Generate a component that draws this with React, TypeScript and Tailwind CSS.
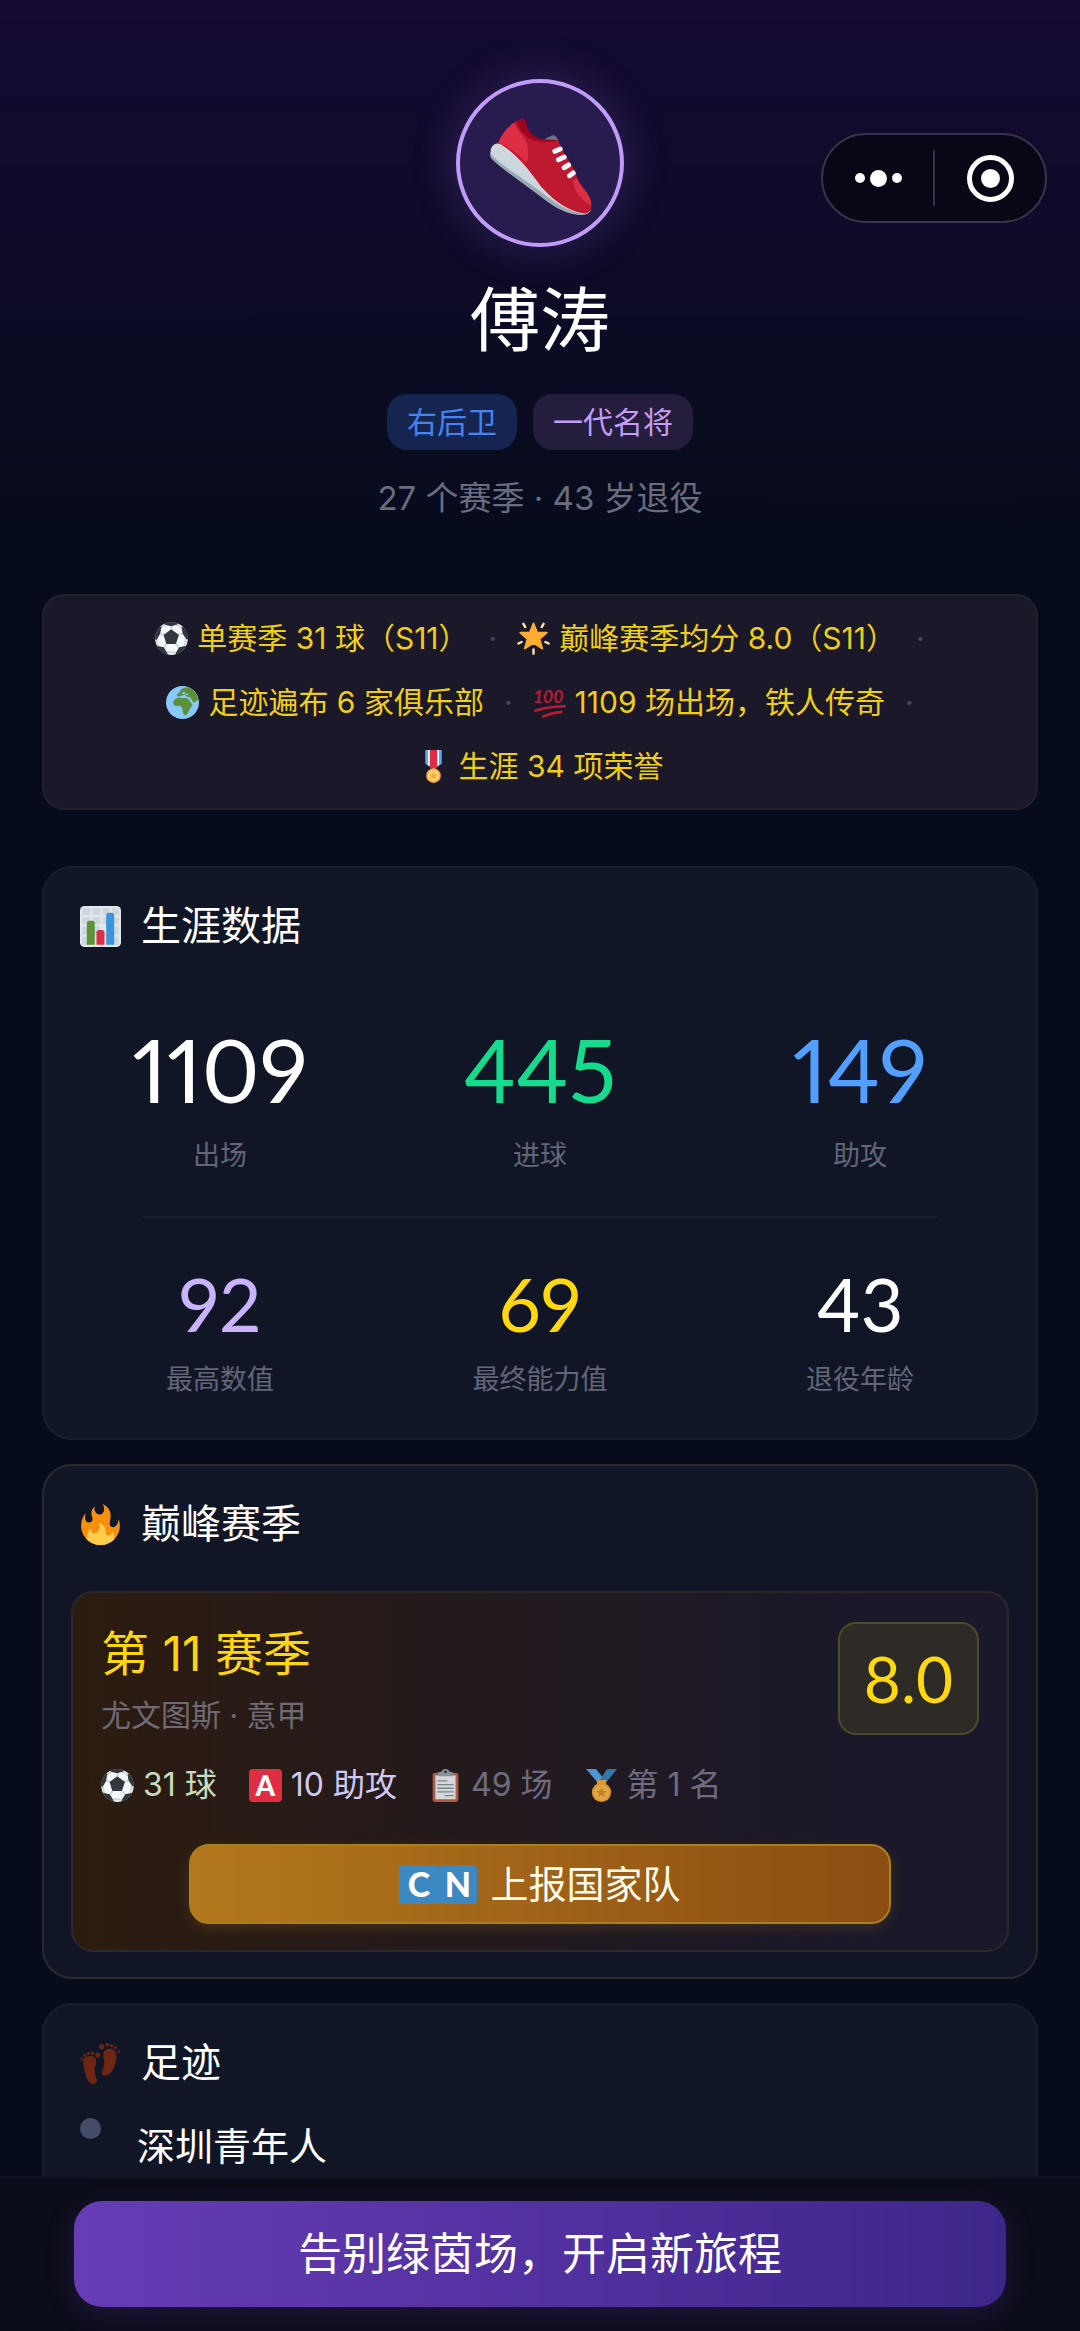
import type { ReactNode } from "react";

interface IconProps {
  className?: string;
}

function SneakerIcon({ className }: IconProps) {
  return (
    <svg viewBox="448 150 308 312" className={className} aria-hidden="true">
      <path fill="#9AAAB4" d="M455 268C449 278 450 288 456 294C490 328 560 372 616 417C656 449 700 464 728 462C742 461 749 456 753 448Z" />
      <path fill="#CCD6DD" d="M468 248C456 252 450 266 453 279C480 311 566 362 624 408C662 438 704 458 738 458C746 457 750 452 752 444L560 290C530 262 490 244 468 248Z" />
      <path fill="#66757F" d="M606 238L638 223C648 221 652 229 656 242Z" />
      <path fill="#BE1931" d="M475 246C488 214 520 181 545 173C553 172 557 178 558 188C562 215 585 238 620 237C635 236 650 236 656 239C660 250 666 262 675 280C690 302 706 328 712 350C722 378 755 400 755 432C755 450 745 459 733 457C680 450 632 410 600 372C565 322 520 268 475 246Z" />
      <path fill="#DD2E44" d="M475 246C484 222 502 198 524 184C528 212 560 222 564 262C566 284 564 296 560 307C534 276 508 258 475 246Z" />
      <path fill="#A0041E" d="M530 180C536 205 556 232 590 240C615 245 640 241 656 239C640 234 600 240 580 222C562 206 560 190 557 179C552 170 540 174 530 180Z" />
      <path fill="#DD2E44" d="M700 358C700 385 722 420 754 432C756 400 724 384 712 352Z" />
      <g stroke="#F5F8FA" strokeWidth="15" strokeLinecap="round">
        <path d="M645 271L661 264" />
        <path d="M656 296L673 288" />
        <path d="M673 320L686 312" />
        <path d="M689 344L700 336" />
      </g>
    </svg>
  );
}

function BallIcon({ className }: IconProps) {
  return (
    <svg viewBox="0 0 36 36" className={className} aria-hidden="true">
      <defs>
        <clipPath id="ball">
          <circle cx="18" cy="18" r="18" />
        </clipPath>
      </defs>
      <g clipPath="url(#ball)">
        <circle cx="18" cy="18" r="18" fill="#F5F8FA" />
        <path stroke="#CCD6DD" strokeWidth="2" d="M18 10V3M11 14.500L3 12M25 14L32 12M27 29L21 21M9 29L15 21M3.500 26L1 18M13 33H22M32 26L34 17M30 7L22 2M5.500 7L12 2" />
        <path fill="#31373D" d="M25.500 13.500L18.300 8.400C18 8.200 17.500 8.200 17.100 8.400L10 13.600C9.600 13.900 9.500 14.300 9.600 14.700L12.100 23.300C12.200 23.700 12.600 24 13 24H22C22.400 24 22.800 23.700 23 23.300L25.900 14.700C26 14.200 25.900 13.800 25.500 13.500Z" />
        <path fill="#31373D" d="M0 18V12L5 5H7L5.600 12.700L2 19.400L1 19.500ZM10.600 3L11 0H24L25 2.500L17.700 4.500ZM29 6L31 5L36 12V19L34 18.500L30.100 12.500ZM2 26L9.500 27.500L13.600 34L13 36H8ZM34 26L26.500 27.500L22.400 34L23 36H28Z" />
      </g>
    </svg>
  );
}

function StarIcon({ className }: IconProps) {
  return (
    <svg viewBox="0 0 36 36" className={className} aria-hidden="true">
      <path fill="#FFAC33" d="M18 1.500L22 11.500H32.500L24.500 18.500L27.500 29L18 23L8.500 29L11.500 18.500L3.500 11.500H14Z" stroke="#FFAC33" strokeWidth="2" strokeLinejoin="round" />
      <g stroke="#FFE8A6" strokeWidth="2.600" strokeLinecap="round">
        <path d="M18 30V34.500M1.500 23.500L5 21.800M34.500 23.500L31 21.800M7 2L9 5.500M29 2L27 5.500" />
      </g>
    </svg>
  );
}

function GlobeIcon({ className }: IconProps) {
  return (
    <svg viewBox="0 0 36 36" className={className} aria-hidden="true">
      <circle cx="18" cy="18" r="18" fill="#88C9F9" />
      <path fill="#5C913B" d="M8 17C7 20 9 22 12 22C15 21 17 22 18 25C18 28 19 31 21 32C24 31 24 28 26 25C28 22 30 20 28 19C26 18 26 15 24 14C21 12 19 14 17 13C14 12 10 13 8 17ZM12 9C11 11 13 12 15 11C17 11 19 9 21 10C23 11 24 13 26 12C28 14 29 18 31 18C33 17 34 15 35.500 15C34 8 30 4 26 2C22 1 20 2 18 3C14 5 17 6 12 9Z" />
      <path fill="#88C9F9" d="M17 8L20 6L21 9L25 8L23 10L19 9Z" />
    </svg>
  );
}

function HundredIcon({ className }: IconProps) {
  return (
    <svg viewBox="0 0 36 36" className={className} aria-hidden="true">
      <text x="0" y="19" fill="#BB1A34" fontFamily="Lato, sans-serif" fontSize="19" fontWeight="700" fontStyle="italic">
        100
      </text>
      <g fill="none" stroke="#BB1A34" strokeWidth="2.800" strokeLinecap="round">
        <path d="M2.500 27C12 23.500 22 22.300 34.500 22" />
        <path d="M11 33.500C17 30.500 23 29 31 28.500" />
      </g>
    </svg>
  );
}

function MilitaryMedalIcon({ className }: IconProps) {
  return (
    <svg viewBox="0 0 36 36" className={className} aria-hidden="true">
      <path fill="#55ACEE" d="M9 0H27V15L18 21L9 15Z" />
      <path fill="#F5F8FA" d="M12 0H24V17H12Z" />
      <path fill="#DD2E44" d="M14 0H22V20H14Z" />
      <circle cx="18" cy="28" r="8" fill="#FFAC33" />
      <circle cx="18" cy="28" r="6" fill="#FFD983" />
      <path fill="#FFAC33" d="M18 23L19.500 26.500L23 26.700L20.300 29L21.200 32.500L18 30.600L14.800 32.500L15.700 29L13 26.700L16.500 26.500Z" />
    </svg>
  );
}

function SportsMedalIcon({ className }: IconProps) {
  return (
    <svg viewBox="0 0 36 36" className={className} aria-hidden="true">
      <path fill="#55ACEE" d="M1 0H12L20 10L15 16Z" />
      <path fill="#3B88C3" d="M24 0H35L22 16L15 14Z" />
      <path fill="#FFAC33" d="M13 12H23V17H13Z" />
      <circle cx="18" cy="25.500" r="10.500" fill="#FFAC33" />
      <circle cx="18" cy="25.500" r="8.200" fill="#FFC450" />
      <path fill="#E8961E" d="M18 19.500L19.700 23.700L24 24L20.700 26.800L21.800 31L18 28.700L14.200 31L15.300 26.800L12 24L16.300 23.700Z" />
    </svg>
  );
}

function ChartIcon({ className }: IconProps) {
  return (
    <svg viewBox="0 0 36 36" className={className} aria-hidden="true">
      <rect width="36" height="36" rx="4" fill="#E1E8ED" />
      <g fill="#CCD6DD">
        <path d="M2 2H9V8H2ZM11 2H18V8H11ZM20 2H26V8H20ZM28 2H34V8H28ZM2 10H9V16H2ZM11 10H18V16H11ZM20 10H26V16H20ZM28 10H34V16H28ZM2 18H9V25H2ZM11 18H18V25H11ZM28 18H34V25H28ZM2 27H9V34H2ZM28 27H34V34H28Z" />
      </g>
      <path fill="#5C913B" d="M6 34V15C6 14 7 13 8 13H11C12 13 13 14 13 15V34Z" />
      <path fill="#DD2E44" d="M14.500 34V23C14.500 22 15.500 21 16.500 21H19.500C20.500 21 21.500 22 21.500 23V34Z" />
      <path fill="#3B94D9" d="M23 34V8C23 7 24 6 25 6H28C29 6 30 7 30 8V34Z" />
    </svg>
  );
}

function FireIcon({ className }: IconProps) {
  return (
    <svg viewBox="0 0 36 36" className={className} aria-hidden="true">
      <path fill="#F4900C" d="M35 19c0-2.062-.367-4.039-1.040-5.868-.46 5.389-3.333 8.157-6.335 6.868-2.812-1.208-.917-5.917-.777-8.164.236-3.809-.012-8.169-6.931-11.794 2.875 5.500.333 8.917-2.333 9.125-2.958.231-5.667-2.542-4.667-7.042-3.238 2.386-3.332 6.402-2.333 9 1.042 2.708-.042 4.958-2.583 5.208-2.840.28-4.418-3.041-2.963-8.333C2.520 10.965 1 14.805 1 19c0 9.389 7.611 17 17 17s17-7.611 17-17z" />
      <path fill="#FFCC4D" d="M28.394 23.999c.148 3.084-2.561 4.293-4.019 3.709-2.106-.843-1.541-2.291-2.083-5.291s-2.625-5.083-5.708-6c2.250 6.333-1.247 8.667-3.080 9.084-1.872.426-3.753-.001-3.968-4.007C7.352 23.668 6 26.676 6 30c0 .368.023.73.055 1.090C9.125 34.124 13.342 36 18 36s8.875-1.876 11.945-4.910c.032-.36.055-.722.055-1.090 0-2.187-.584-4.236-1.606-6.001z" />
    </svg>
  );
}

function ClipboardIcon({ className }: IconProps) {
  return (
    <svg viewBox="0 0 36 36" className={className} aria-hidden="true">
      <rect x="4" y="4" width="28" height="32" rx="3" fill="#C1694F" />
      <rect x="7" y="7" width="22" height="26" fill="#F5F8FA" />
      <path fill="#99AAB5" d="M10 8V5C10 4 11 3 12 3H14C14 1 16 0 18 0S22 1 22 3H24C25 3 26 4 26 5V8Z" />
      <circle cx="18" cy="3" r="1.500" fill="#292F33" />
      <path stroke="#8899A6" strokeWidth="1.500" d="M9 13H20M9 17H27M9 21H27M9 25H27M17 29H27" />
    </svg>
  );
}

function FootprintsIcon({ className }: IconProps) {
  return (
    <svg viewBox="0 0 36 36" className={className} aria-hidden="true">
      <g fill="#6E2613">
        <path d="M3 19C2 14 5 11.500 9 11.500C13 11.500 15 14 14 18C13 22 12 25 14 30C16 34 14 36 11 36C7 36 4 26 3 19Z" />
        <circle cx="15.500" cy="10.500" r="2.200" />
        <circle cx="11" cy="9" r="1.500" />
        <circle cx="7.400" cy="9.200" r="1.400" />
        <circle cx="4.300" cy="11" r="1.300" />
        <circle cx="1.800" cy="14" r="1.200" />
        <path d="M32 12C32 7 29 4.500 25.500 5C21.500 5.500 20 8 20.500 12C21.500 16 22 19 20 23C18 27 20 29 23 28.500C28 28 32 18 32 12Z" />
        <circle cx="19" cy="3.200" r="2.300" />
        <circle cx="24" cy="1.600" r="1.600" />
        <circle cx="27.800" cy="2.300" r="1.400" />
        <circle cx="31" cy="4.200" r="1.300" />
        <circle cx="34" cy="7.500" r="1.200" />
      </g>
    </svg>
  );
}

const highlights = [
  { icon: <BallIcon className="size-[33px]" />, text: "单赛季 31 球（S11）" },
  { icon: <StarIcon className="size-[33px]" />, text: "巅峰赛季均分 8.0（S11）" },
  { icon: <GlobeIcon className="size-[33px]" />, text: "足迹遍布 6 家俱乐部" },
  { icon: <HundredIcon className="size-[33px]" />, text: "1109 场出场，铁人传奇" },
  { icon: <MilitaryMedalIcon className="size-[33px]" />, text: "生涯 34 项荣誉" },
];

const totals = [
  { label: "出场", value: "1109", color: "text-white" },
  { label: "进球", value: "445", color: "text-[#14dc8c]" },
  { label: "助攻", value: "149", color: "text-[#529fff]" },
];

const abilities = [
  { label: "最高数值", value: "92", color: "text-[#c9b3fb]" },
  { label: "最终能力值", value: "69", color: "text-[#ffd90d]" },
  { label: "退役年龄", value: "43", color: "text-white" },
];

function Capsule() {
  return (
    <div className="fixed right-[33px] top-[133px] flex h-[90px] w-[226px] items-center rounded-full border-2 border-[#38334a] bg-[#090615]">
      <button type="button" aria-label="更多" className="flex flex-1 items-center justify-center gap-[5px]">
        <span className="size-[10px] rounded-full bg-white" />
        <span className="size-[17px] rounded-full bg-white" />
        <span className="size-[10px] rounded-full bg-white" />
      </button>
      <span className="h-14 w-[2px] bg-[#38334a]" />
      <button type="button" aria-label="关闭" className="flex flex-1 items-center justify-center">
        <span className="flex size-[47px] items-center justify-center rounded-full border-[5px] border-white">
          <span className="size-[19px] rounded-full bg-white" />
        </span>
      </button>
    </div>
  );
}

function Card({ icon, title, border, children }: { icon: ReactNode; title: string; border: string; children: ReactNode }) {
  return (
    <section className={`rounded-[30px] border-2 bg-[#111627] pt-[34px] ${border}`}>
      <h2 className="flex items-center gap-5 px-9 text-[40px] leading-[48px] text-white">
        {icon}
        {title}
      </h2>
      {children}
    </section>
  );
}

export default function App() {
  return (
    <div className="min-h-screen bg-[#060c1b] bg-[linear-gradient(#150a32,#0d0b26_300px,#060c1b_560px)] pb-[160px] font-['Inter','Noto_Sans_CJK_SC',sans-serif]">
      <Capsule />

      <header className="flex flex-col items-center pt-[79px]">
        <div className="flex size-[168px] items-center justify-center rounded-full border-4 border-[#c09cf8] bg-[#281c4e] shadow-[0_0_44px_rgba(150,110,240,0.25)]">
          <SneakerIcon className="h-[104px] w-[103px]" />
        </div>
        <h1 className="mt-[34px] text-[70px] leading-[80px] text-white">傅涛</h1>
        <div className="mt-[33px] flex gap-4">
          <span className="rounded-[20px] bg-[#152550] px-5 text-[30px] leading-[56px] text-[#4583ee]">右后卫</span>
          <span className="rounded-[20px] bg-[#241d3b] px-5 text-[30px] leading-[56px] text-[#c39cf8]">一代名将</span>
        </div>
        <p className="mt-7 text-[33px] leading-[40px] text-[#696d7e]">27 个赛季 · 43 岁退役</p>
      </header>

      <main className="flex flex-col gap-6 px-[42px] pt-[76px]">
        <ul className="mb-8 flex flex-wrap justify-center gap-5 rounded-[22px] border-2 border-[#24222b] bg-[#1a1829] px-[54px] py-5 text-[30px] leading-[44px] text-[#f0ce12]">
          {highlights.map((item, index) => (
            <li key={item.text} className="flex items-center gap-5">
              <span className="flex items-center gap-[9px]">
                {item.icon}
                {item.text}
              </span>
              {index < highlights.length - 1 && <span className="text-[#4a4856]">·</span>}
            </li>
          ))}
        </ul>

        <Card icon={<ChartIcon className="size-[41px]" />} title="生涯数据" border="border-[#191e2f]">
          <dl className="mx-4 mt-[74px] grid grid-cols-3 text-center">
            {totals.map((stat) => (
              <div key={stat.label} className="flex flex-col-reverse gap-6">
                <dt className="text-[27px] leading-[36px] text-[#626678]">{stat.label}</dt>
                <dd className={`font-['Lato',sans-serif] text-[88px] leading-[90px] proportional-nums ${stat.color}`}>{stat.value}</dd>
              </div>
            ))}
          </dl>
          <hr className="mx-[98px] mt-[42px] border-t-2 border-[#1a1f30]" />
          <dl className="mx-4 mt-12 grid grid-cols-3 pb-10 text-center">
            {abilities.map((stat) => (
              <div key={stat.label} className="flex flex-col-reverse gap-5">
                <dt className="text-[27px] leading-[36px] text-[#626678]">{stat.label}</dt>
                <dd className={`font-['Lato',sans-serif] text-[74px] leading-[76px] proportional-nums ${stat.color}`}>{stat.value}</dd>
              </div>
            ))}
          </dl>
        </Card>

        <Card icon={<FireIcon className="size-[41px]" />} title="巅峰赛季" border="border-[#2b2b2b]">
          <div className="mx-[27px] mb-[25px] mt-[43px] rounded-[22px] border-2 border-[#2f2828] bg-[linear-gradient(90deg,#2c1c10,#1a182a_85%)] px-7 pb-[26px] pt-[29px]">
            <div className="flex justify-between">
              <div className="pt-1">
                <h3 className="text-[48px] leading-[56px] text-[#ffd60a]">第 11 赛季</h3>
                <p className="mt-[13px] text-[30px] leading-[40px] text-[#6f6a74]">尤文图斯 · 意甲</p>
              </div>
              <div className="flex h-[113px] w-[141px] items-center justify-center rounded-[18px] border-2 border-[#4d4a2b] bg-[#2e2a25] font-['Lato',sans-serif] text-[64px] text-[#ffd90d]">8.0</div>
            </div>
            <ul className="mt-[30px] flex gap-8 text-[32px] leading-[40px] text-[#6f6c80]">
              <li className="flex items-center gap-[9px] text-[#c8dcc0]">
                <BallIcon className="size-[33px]" />
                31 球
              </li>
              <li className="flex items-center gap-[9px] text-[#d0caf2]">
                <span className="flex size-[33px] items-center justify-center rounded bg-[#dd2e44] font-['Lato',sans-serif] text-[28px] font-black leading-none text-white">A</span>
                10 助攻
              </li>
              <li className="flex items-center gap-[9px]">
                <ClipboardIcon className="size-[33px] opacity-85" />
                49 场
              </li>
              <li className="flex items-center gap-[9px]">
                <SportsMedalIcon className="size-[33px] opacity-85" />
                第 1 名
              </li>
            </ul>
            <button type="button" className="mx-auto mt-[39px] flex h-20 w-4/5 items-center justify-center gap-[13px] rounded-[20px] border-2 border-[#a8801c] bg-[linear-gradient(90deg,#b3781d,#8c4d12)] text-[38px] leading-none text-[#fffbe8] shadow-[0_4px_14px_rgba(180,120,20,0.22)]">
              <span className="flex font-['Lato',sans-serif] text-[34px] font-black text-white">
                <span className="flex size-[39px] items-center justify-center rounded bg-[#3b88c3]">C</span>
                <span className="flex size-[39px] items-center justify-center rounded bg-[#3b88c3]">N</span>
              </span>
              上报国家队
            </button>
          </div>
        </Card>

        <Card icon={<FootprintsIcon className="size-[41px]" />} title="足迹" border="border-[#191e2f]">
          <ol className="px-9 pb-9 pt-[31px]">
            <li className="flex gap-9">
              <span className="size-[21px] rounded-full bg-[#454d68]" />
              <span className="pt-1 text-[38px] leading-[48px] text-white">深圳青年人</span>
            </li>
          </ol>
        </Card>
      </main>

      <footer className="fixed inset-x-0 bottom-0 border-t-2 border-[#141524] bg-[#0c0d1a] px-[74px] pb-6 pt-[23px]">
        <button type="button" className="h-[106px] w-full rounded-[28px] bg-[linear-gradient(90deg,#673cb5,#3d268a)] text-[44px] text-white shadow-[0_8px_30px_rgba(100,60,190,0.2)]">
          告别绿茵场，开启新旅程
        </button>
      </footer>
    </div>
  );
}
